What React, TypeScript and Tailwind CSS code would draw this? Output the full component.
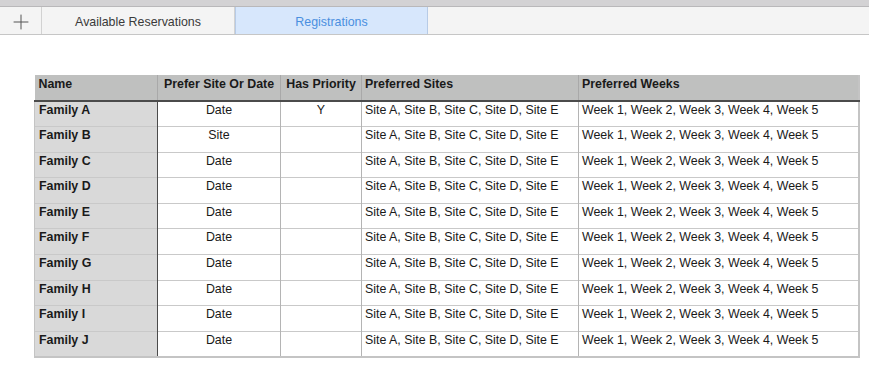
import { Plus } from 'lucide-react';

const sites = 'Site A, Site B, Site C, Site D, Site E';
const weeks = 'Week 1, Week 2, Week 3, Week 4, Week 5';

const families = [
  { name: 'Family A', prefer: 'Date', priority: 'Y' },
  { name: 'Family B', prefer: 'Site', priority: '' },
  { name: 'Family C', prefer: 'Date', priority: '' },
  { name: 'Family D', prefer: 'Date', priority: '' },
  { name: 'Family E', prefer: 'Date', priority: '' },
  { name: 'Family F', prefer: 'Date', priority: '' },
  { name: 'Family G', prefer: 'Date', priority: '' },
  { name: 'Family H', prefer: 'Date', priority: '' },
  { name: 'Family I', prefer: 'Date', priority: '' },
  { name: 'Family J', prefer: 'Date', priority: '' },
];

export default function App() {
  return (
    <div className="w-[869px] h-[380px] bg-white overflow-hidden font-['Liberation_Sans',Arial,sans-serif] text-[12.4px] leading-[14px] text-[#1a1a1a]">
      {/* Window title strip (cut off) */}
      <div className="h-[7px] bg-[#d3d2d4] border-b border-[#b9b8ba]" />

      {/* Tab bar */}
      <div className="flex h-[28px] bg-[#f4f4f4] border-b border-[#c6c6c6]">
        <div className="w-[42px] flex items-center justify-center border-r border-[#d2d2d2] text-[#555] pt-[2px]">
          <Plus size={24} strokeWidth={1} />
        </div>
        <div className="w-[193px] flex items-center justify-center pt-[3px] text-[#3a3a3a] border-r border-[#d2d2d2]">
          Available Reservations
        </div>
        <div className="w-[193px] flex items-center justify-center pt-[3px] bg-[#d7e7fc] border-x border-[#b7cbe6] text-[#4a8fe0]">
          Registrations
        </div>
      </div>

      {/* Table */}
      <div className="pl-[34px] pt-[40px]">
        <table className="border-collapse table-fixed w-[824px] border-r-2 border-b-2 border-[#c4c4c4]">
          <colgroup>
            <col className="w-[123px]" />
            <col className="w-[123px]" />
            <col className="w-[81px]" />
            <col className="w-[217px]" />
            <col className="w-[280px]" />
          </colgroup>
          <thead>
            <tr className="h-[26px] bg-[#bfc0bf] font-bold border-b-2 border-[#4b4b4b]">
              <th className="text-left align-top pt-[2px] pl-[4px] border-r border-[#a9a9a9]">Name</th>
              <th className="text-center align-top pt-[2px] border-r border-[#a9a9a9]">Prefer Site Or Date</th>
              <th className="text-center align-top pt-[2px] border-r border-[#a9a9a9]">Has Priority</th>
              <th className="text-left align-top pt-[2px] pl-[3px] border-r border-[#a9a9a9]">Preferred Sites</th>
              <th className="text-left align-top pt-[2px] pl-[3px]">Preferred Weeks</th>
            </tr>
          </thead>
          <tbody>
            {families.map((f) => (
              <tr key={f.name} className="h-[25.6px] border-b border-[#c9c9c9]">
                <td className="bg-[#d9d9d9] font-bold align-top pt-[1px] pl-[4px] border-r border-[#4b4b4b] border-l border-l-[#c4c4c4]">
                  {f.name}
                </td>
                <td className="text-center align-top pt-[1px] border-r border-[#b4b4b4]">{f.prefer}</td>
                <td className="text-center align-top pt-[1px] border-r border-[#b4b4b4]">{f.priority}</td>
                <td className="align-top pt-[1px] pl-[3px] border-r border-[#b4b4b4]">{sites}</td>
                <td className="align-top pt-[1px] pl-[3px]">{weeks}</td>
              </tr>
            ))}
          </tbody>
        </table>
      </div>
    </div>
  );
}
